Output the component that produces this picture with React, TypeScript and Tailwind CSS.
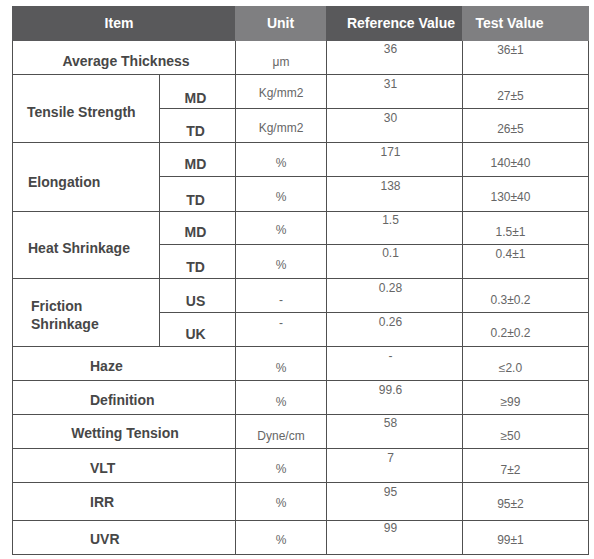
import type { ReactNode } from "react";

function Label({ children, className = "" }: { children: ReactNode; className?: string }) {
  return (
    <div className={`bg-white text-[14px] leading-[16px] font-bold text-[#474747] ${className}`}>
      {children}
    </div>
  );
}

function Val({ children, className = "" }: { children: ReactNode; className?: string }) {
  return (
    <div className={`bg-white text-center text-[12px] leading-[14px] text-[#666] ${className}`}>
      {children}
    </div>
  );
}

function App() {
  return (
    <div className="min-h-screen bg-white pt-[6px] pl-[12px] font-['Liberation_Sans',Arial,sans-serif]">
      <div className="flex w-[577px] h-[35px] text-[14px] font-bold text-white">
        <div className="w-[223px] bg-[#59595b] flex items-center justify-center pr-[9px]">Item</div>
        <div className="w-[91px] bg-[#7f7f81] flex items-center justify-center">Unit</div>
        <div className="w-[136px] bg-[#59595b] flex items-center justify-center pl-[14px]">Reference Value</div>
        <div className="w-[127px] bg-[#7f7f81] flex items-center justify-center pr-[32px]">Test Value</div>
      </div>

      <div className="grid w-[577px] grid-cols-[146px_75px_90px_135px_125px] grid-rows-[33px_33px_33px_33px_34px_32px_33px_33px_33px_33px_33px_33px_33px_37px_33px] gap-px bg-[#505050] border border-t-0 border-[#505050]">
        {/* Average Thickness */}
        <Label className="col-span-2 text-center pt-[12px] pl-[4px]">Average Thickness</Label>
        <Val className="pt-[14px]">μm</Val>
        <Val className="pt-[1px] pr-2">36</Val>
        <Val className="pt-[2px] pr-[30px]">36±1</Val>

        {/* Tensile Strength */}
        <Label className="row-span-2 pl-[14px] pt-[29px]">Tensile Strength</Label>
        <Label className="text-center pt-[15px] pr-[4px]">MD</Label>
        <Val className="pt-[11px]">Kg/mm2</Val>
        <Val className="pt-[2px] pr-2">31</Val>
        <Val className="pt-[14px] pr-[30px]">27±5</Val>
        <Label className="text-center pt-[14px] pr-[4px]">TD</Label>
        <Val className="pt-[12px]">Kg/mm2</Val>
        <Val className="pt-[2px] pr-2">30</Val>
        <Val className="pt-[13px] pr-[30px]">26±5</Val>

        {/* Elongation */}
        <Label className="row-span-2 pl-[15px] pt-[31px]">Elongation</Label>
        <Label className="text-center pt-[13px] pr-[4px]">MD</Label>
        <Val className="pt-[13px]">%</Val>
        <Val className="pt-[2px] pr-2">171</Val>
        <Val className="pt-[13px] pr-[30px]">140±40</Val>
        <Label className="text-center pt-[15px] pr-[4px]">TD</Label>
        <Val className="pt-[13px]">%</Val>
        <Val className="pt-[2px] pr-2">138</Val>
        <Val className="pt-[13px] pr-[30px]">130±40</Val>

        {/* Heat Shrinkage */}
        <Label className="row-span-2 pl-[15px] pt-[28px]">Heat Shrinkage</Label>
        <Label className="text-center pt-[12px] pr-[4px]">MD</Label>
        <Val className="pt-[11px]">%</Val>
        <Val className="pt-[1px] pr-2">1.5</Val>
        <Val className="pt-[13px] pr-[30px]">1.5±1</Val>
        <Label className="text-center pt-[14px] pr-[4px]">TD</Label>
        <Val className="pt-[13px]">%</Val>
        <Val className="pt-[1px] pr-2">0.1</Val>
        <Val className="pt-[2px] pr-[30px]">0.4±1</Val>

        {/* Friction Shrinkage */}
        <Label className="row-span-2 pl-[18px] pt-[18px] leading-[18px]">
          Friction
          <br />
          Shrinkage
        </Label>
        <Label className="text-center pt-[14px] pr-[4px]">US</Label>
        <Val className="pt-[14px]">-</Val>
        <Val className="pt-[2px] pr-2">0.28</Val>
        <Val className="pt-[14px] pr-[30px]">0.3±0.2</Val>
        <Label className="text-center pt-[13px] pr-[4px]">UK</Label>
        <Val className="pt-[3px]">-</Val>
        <Val className="pt-[2px] pr-2">0.26</Val>
        <Val className="pt-[13px] pr-[30px]">0.2±0.2</Val>

        {/* Single rows */}
        <Label className="col-span-2 pl-[77px] pt-[11px]">Haze</Label>
        <Val className="pt-[14px]">%</Val>
        <Val className="pt-[2px] pr-2">-</Val>
        <Val className="pt-[14px] pr-[30px]">≤2.0</Val>

        <Label className="col-span-2 pl-[77px] pt-[11px]">Definition</Label>
        <Val className="pt-[14px]">%</Val>
        <Val className="pt-[2px] pr-2">99.6</Val>
        <Val className="pt-[14px] pr-[30px]">≥99</Val>

        <Label className="col-span-2 text-center pt-[10px] pl-[2px]">Wetting Tension</Label>
        <Val className="pt-[14px]">Dyne/cm</Val>
        <Val className="pt-[1px] pr-2">58</Val>
        <Val className="pt-[14px] pr-[30px]">≥50</Val>

        <Label className="col-span-2 pl-[77px] pt-[11px]">VLT</Label>
        <Val className="pt-[13px]">%</Val>
        <Val className="pt-[2px] pr-2">7</Val>
        <Val className="pt-[14px] pr-[30px]">7±2</Val>

        <Label className="col-span-2 pl-[77px] pt-[11px]">IRR</Label>
        <Val className="pt-[13px]">%</Val>
        <Val className="pt-[2px] pr-2">95</Val>
        <Val className="pt-[14px] pr-[30px]">95±2</Val>

        <Label className="col-span-2 pl-[77px] pt-[10px]">UVR</Label>
        <Val className="pt-[12px]">%</Val>
        <Val className="pt-0 pr-2">99</Val>
        <Val className="pt-[12px] pr-[30px]">99±1</Val>
      </div>
    </div>
  );
}

export default App;
